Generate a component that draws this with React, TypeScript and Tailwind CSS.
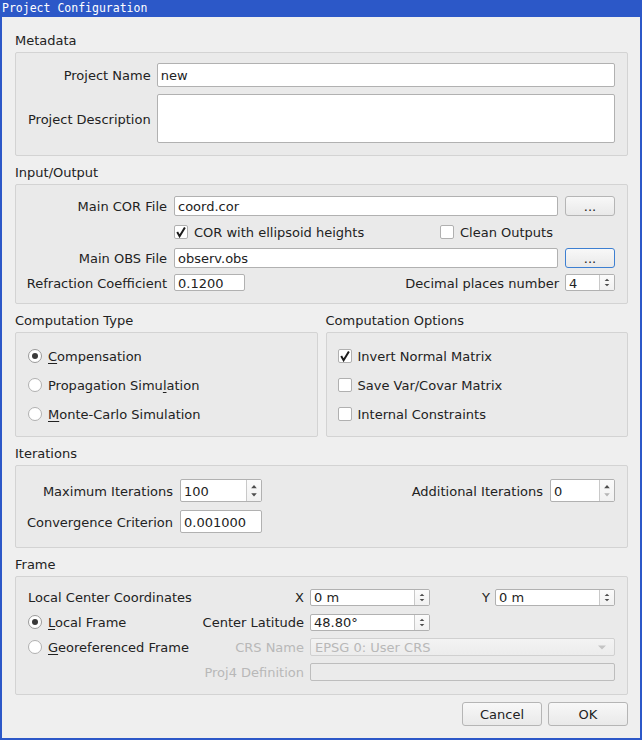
import React from "react";

function Input({ cls, value, disabled }: { cls: string; value?: string; disabled?: boolean }) {
  return (
    <div
      className={`${cls} border rounded-[2px] pl-[3px] pt-[2px] flex items-center overflow-hidden whitespace-nowrap ${
        disabled ? "bg-[#ebebeb] border-[#bdbdbd] text-[#b8b8b8]" : "bg-white border-[#b1b1b1]"
      }`}
    >
      {value}
    </div>
  );
}

function Arrows({ big, downDisabled }: { big?: boolean; downDisabled?: boolean }) {
  if (big) {
    return (
      <svg width="15" height="21" viewBox="0 0 15 21">
        <polygon points="4.5,8 7.5,4.5 10.5,8" fill="#4d4d4d" />
        <polygon points="4.5,13.5 7.5,17 10.5,13.5" fill={downDisabled ? "#b5b5b5" : "#4d4d4d"} />
      </svg>
    );
  }
  return (
    <svg width="15" height="15" viewBox="0 0 15 15">
      <polygon points="5,6 7.5,3.5 10,6" fill="#4d4d4d" />
      <polygon points="5,9 7.5,11.5 10,9" fill={downDisabled ? "#b5b5b5" : "#4d4d4d"} />
    </svg>
  );
}

function Spin({ cls, value, big, downDisabled }: { cls: string; value: string; big?: boolean; downDisabled?: boolean }) {
  return (
    <div className={`${cls} border border-[#b1b1b1] rounded-[2px] bg-white flex overflow-hidden`}>
      <div className="flex-1 pl-[3px] pt-[2px] flex items-center whitespace-nowrap">{value}</div>
      <div className="w-[15px] border-l border-[#c9c9c9] flex items-center justify-center bg-linear-to-b from-[#fbfbfb] to-[#f1f1f1]">
        <Arrows big={big} downDisabled={downDisabled} />
      </div>
    </div>
  );
}

function Button({ cls, label, focused }: { cls: string; label: string; focused?: boolean }) {
  return (
    <div
      className={`${cls} border rounded-[3px] pt-[2px] bg-linear-to-b from-[#f8f8f8] to-[#e9e9e9] flex items-center justify-center ${
        focused ? "border-[#3d7fd1]" : "border-[#b5b5b5]"
      }`}
    >
      {label}
    </div>
  );
}

function Check({ checked }: { checked?: boolean }) {
  return (
    <div className="w-[14px] h-[14px] shrink-0 border border-[#b0b0b0] rounded-[2px] bg-white flex items-center justify-center">
      {checked && (
        <svg width="12" height="12" viewBox="0 0 12 12">
          <path d="M2.2 6 L4.6 10.2 L9.9 1.4" fill="none" stroke="#1c1c1c" strokeWidth="2" strokeLinejoin="miter" />
        </svg>
      )}
    </div>
  );
}

function Radio({ checked }: { checked?: boolean }) {
  return (
    <div
      className={`w-[14px] h-[14px] shrink-0 rounded-full border bg-white flex items-center justify-center ${
        checked ? "border-[#9a9a9a]" : "border-[#b0b0b0]"
      }`}
    >
      {checked && <div className="w-[6px] h-[6px] rounded-full bg-[#3a3a3a]" />}
    </div>
  );
}

function Section({ title, box, children }: { title: string; box: string; children: React.ReactNode }) {
  return (
    <div className="flex flex-col min-w-0">
      <div className="h-[16px] pt-[1px] leading-[16px] whitespace-nowrap">{title}</div>
      <div className={`mt-[4px] border border-[#d3d3d3] bg-[#eaeaea] rounded-[2px] ${box}`}>{children}</div>
    </div>
  );
}

const U = ({ c }: { c: string }) => <span className="underline underline-offset-[2px] decoration-[1px]">{c}</span>;

export default function App() {
  return (
    <div className="w-[642px] h-[740px] bg-[#2c58c8] flex flex-col font-['DejaVu_Sans',sans-serif] text-[13px] text-[#222222] overflow-hidden">
      <div className="h-[17px] shrink-0 pl-[2px] text-white font-['DejaVu_Sans_Mono',monospace] text-[11.5px] leading-[17px]">
        Project Configuration
      </div>
      <div className="flex-1 mx-[2px] mb-[2px] bg-[#efefef] pl-[13px] pr-[12px] pt-[15px] flex flex-col gap-[8px]">
        {/* Metadata */}
        <Section title="Metadata" box="h-[104px] pt-[10px] pl-[12px] pr-[12px]">
          <div className="grid grid-cols-[auto_1fr] gap-x-[6px] gap-y-[7px]">
            <div className="h-[24px] pt-[2px] flex items-center justify-end whitespace-nowrap">Project Name</div>
            <Input cls="h-[24px]" value="new" />
            <div className="h-[49px] pt-[2px] flex items-center justify-end whitespace-nowrap">Project Description</div>
            <Input cls="h-[49px]" />
          </div>
        </Section>

        {/* Input/Output */}
        <Section title="Input/Output" box="h-[120px] pt-[11px] pl-[11px] pr-[12px]">
          <div className="grid grid-cols-[140px_1fr_50px] gap-x-[7px] gap-y-[6px]">
            <div className="h-[20px] pt-[2px] flex items-center justify-end whitespace-nowrap">Main COR File</div>
            <Input cls="h-[20px]" value="coord.cor" />
            <Button cls="h-[20px]" label="..." />

            <div className="h-[20px]" />
            <div className="col-span-2 h-[20px] flex items-center">
              <div className="w-[266px] flex items-center gap-[6px] whitespace-nowrap">
                <Check checked />
                <span className="pt-[2px]">COR with ellipsoid heights</span>
              </div>
              <div className="flex items-center gap-[6px] whitespace-nowrap">
                <Check />
                <span className="pt-[2px]">Clean Outputs</span>
              </div>
            </div>

            <div className="h-[20px] pt-[2px] flex items-center justify-end whitespace-nowrap">Main OBS File</div>
            <Input cls="h-[20px]" value="observ.obs" />
            <Button cls="h-[20px]" label="..." focused />

            <div className="h-[17px] pt-[2px] flex items-center justify-end whitespace-nowrap">Refraction Coefficient</div>
            <div className="col-span-2 h-[17px] flex items-center">
              <Input cls="h-[17px] w-[71px]" value="0.1200" />
              <div className="flex-1" />
              <span className="pt-[2px] whitespace-nowrap">Decimal places number</span>
              <Spin cls="ml-[6px] w-[50px] h-[17px]" value="4" />
            </div>
          </div>
        </Section>

        {/* Computation */}
        <div className="flex gap-[8px]">
          <div className="flex-1 min-w-0">
            <Section title="Computation Type" box="h-[105px] pt-[13px] pl-[12px]">
              <div className="flex flex-col gap-[10px]">
                <div className="h-[19px] flex items-center gap-[6px] whitespace-nowrap">
                  <Radio checked />
                  <span className="pt-[2px]">
                    <U c="C" />
                    ompensation
                  </span>
                </div>
                <div className="h-[19px] flex items-center gap-[6px] whitespace-nowrap">
                  <Radio />
                  <span className="pt-[2px]">
                    Propagation Simu
                    <U c="l" />
                    ation
                  </span>
                </div>
                <div className="h-[19px] flex items-center gap-[6px] whitespace-nowrap">
                  <Radio />
                  <span className="pt-[2px]">
                    <U c="M" />
                    onte-Carlo Simulation
                  </span>
                </div>
              </div>
            </Section>
          </div>
          <div className="flex-1 min-w-0">
            <Section title="Computation Options" box="h-[105px] pt-[13px] pl-[11px]">
              <div className="flex flex-col gap-[10px]">
                <div className="h-[19px] flex items-center gap-[6px] whitespace-nowrap">
                  <Check checked />
                  <span className="pt-[2px]">Invert Normal Matrix</span>
                </div>
                <div className="h-[19px] flex items-center gap-[6px] whitespace-nowrap">
                  <Check />
                  <span className="pt-[2px]">Save Var/Covar Matrix</span>
                </div>
                <div className="h-[19px] flex items-center gap-[6px] whitespace-nowrap">
                  <Check />
                  <span className="pt-[2px]">Internal Constraints</span>
                </div>
              </div>
            </Section>
          </div>
        </div>

        {/* Iterations */}
        <Section title="Iterations" box="h-[83px] pt-[13px] pl-[12px] pr-[12px]">
          <div className="grid grid-cols-[145px_82px_1fr] gap-x-[7px] gap-y-[8px]">
            <div className="h-[23px] pt-[2px] flex items-center justify-end whitespace-nowrap">Maximum Iterations</div>
            <Spin cls="h-[23px]" value="100" big />
            <div className="h-[23px] flex items-center justify-end whitespace-nowrap">
              <span className="pt-[2px]">Additional Iterations</span>
              <Spin cls="ml-[7px] w-[65px] h-[23px]" value="0" big downDisabled />
            </div>

            <div className="h-[23px] pt-[2px] flex items-center justify-end whitespace-nowrap">Convergence Criterion</div>
            <Input cls="h-[23px]" value="0.001000" />
            <div />
          </div>
        </Section>

        {/* Frame */}
        <Section title="Frame" box="h-[119px] pt-[11px] pl-[12px] pr-[12px]">
          <div className="flex flex-col gap-[7px]">
            <div className="h-[18px] flex items-center">
              <div className="w-[276px] pt-[2px] flex items-center justify-between whitespace-nowrap">
                <span>Local Center Coordinates</span>
                <span>X</span>
              </div>
              <div className="ml-[6px] flex-1 flex items-center">
                <Spin cls="w-[120px] h-[17px]" value="0 m" />
                <div className="flex-1 pt-[2px] flex justify-end pr-[5px]">Y</div>
                <Spin cls="w-[120px] h-[17px]" value="0 m" />
              </div>
            </div>
            <div className="h-[18px] flex items-center">
              <div className="w-[276px] flex items-center justify-between whitespace-nowrap">
                <div className="flex items-center gap-[6px]">
                  <Radio checked />
                  <span className="pt-[2px]">
                    <U c="L" />
                    ocal Frame
                  </span>
                </div>
                <span className="pt-[2px]">Center Latitude</span>
              </div>
              <div className="ml-[6px] flex-1 flex items-center">
                <Spin cls="w-[120px] h-[17px]" value="48.80°" />
              </div>
            </div>
            <div className="h-[18px] flex items-center">
              <div className="w-[276px] flex items-center justify-between whitespace-nowrap">
                <div className="flex items-center gap-[6px]">
                  <Radio />
                  <span className="pt-[2px]">
                    <U c="G" />
                    eoreferenced Frame
                  </span>
                </div>
                <span className="pt-[2px] text-[#b8b8b8]">CRS Name</span>
              </div>
              <div className="ml-[6px] flex-1 h-[18px] border border-[#d0d0d0] rounded-[2px] bg-linear-to-b from-[#f3f3f3] to-[#ececec] flex items-center pl-[4px] pr-[8px] text-[#b8b8b8]">
                <span className="flex-1 pt-[2px] whitespace-nowrap">EPSG 0: User CRS</span>
                <svg width="8" height="5" viewBox="0 0 8 5">
                  <polygon points="0,0.5 8,0.5 4,4.5" fill="#c4c4c4" />
                </svg>
              </div>
            </div>
            <div className="h-[18px] flex items-center">
              <div className="w-[276px] pt-[2px] flex items-center justify-end whitespace-nowrap text-[#b8b8b8]">
                Proj4 Definition
              </div>
              <Input cls="ml-[6px] flex-1 h-[18px]" disabled />
            </div>
          </div>
        </Section>

        <div className="-mt-[1px] flex justify-end gap-[6px]">
          <Button cls="w-[80px] h-[24px]" label="Cancel" />
          <Button cls="w-[80px] h-[24px]" label="OK" />
        </div>
      </div>
    </div>
  );
}
